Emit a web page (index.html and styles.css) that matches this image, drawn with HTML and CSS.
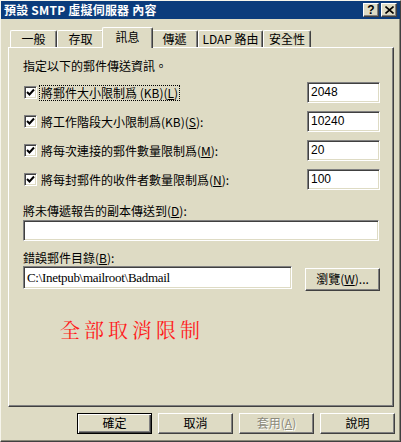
FILE: index.html
```html
<!DOCTYPE html>
<html lang="zh-Hant">
<head>
<meta charset="utf-8">
<title>預設 SMTP 虛擬伺服器 內容</title>
<link rel="stylesheet" href="styles.css">
</head>
<body>
<div class="window">
  <div class="titlebar">
    <span class="title">預設 SMTP 虛擬伺服器 內容</span>
    <span class="tbtn">?</span>
    <span class="tbtn close">
      <svg width="9" height="8" viewBox="0 0 9 8"><path d="M0.5 0.5 L8.5 7.5 M8.5 0.5 L0.5 7.5" stroke="#000" stroke-width="1.6"/></svg>
    </span>
  </div>

  <div class="tabstrip">
    <div class="tab w47">一般</div>
    <div class="tab w47">存取</div>
    <div class="tab active">訊息</div>
    <div class="tab w47">傳遞</div>
    <div class="tab w65">LDAP 路由</div>
    <div class="tab w48">安全性</div>
  </div>

  <div class="panel">
    <div class="intro">指定以下的郵件傳送資訊。</div>

    <div class="row first">
      <span class="check"><svg width="9" height="9" viewBox="0 0 9 9"><path d="M1 4 L3.5 6.5 L8 1.5" fill="none" stroke="#000" stroke-width="2"/></svg></span>
      <span class="label focus">將郵件大小限制爲 (KB)(<u>L</u>)</span>
      <span class="spacer"></span>
      <div class="field small">2048</div>
    </div>
    <div class="row">
      <span class="check"><svg width="9" height="9" viewBox="0 0 9 9"><path d="M1 4 L3.5 6.5 L8 1.5" fill="none" stroke="#000" stroke-width="2"/></svg></span>
      <span class="label">將工作階段大小限制爲(KB)(<u>S</u>):</span>
      <span class="spacer"></span>
      <div class="field small">10240</div>
    </div>
    <div class="row">
      <span class="check"><svg width="9" height="9" viewBox="0 0 9 9"><path d="M1 4 L3.5 6.5 L8 1.5" fill="none" stroke="#000" stroke-width="2"/></svg></span>
      <span class="label">將每次連接的郵件數量限制爲(<u>M</u>):</span>
      <span class="spacer"></span>
      <div class="field small">20</div>
    </div>
    <div class="row">
      <span class="check"><svg width="9" height="9" viewBox="0 0 9 9"><path d="M1 4 L3.5 6.5 L8 1.5" fill="none" stroke="#000" stroke-width="2"/></svg></span>
      <span class="label">將每封郵件的收件者數量限制爲(<u>N</u>):</span>
      <span class="spacer"></span>
      <div class="field small">100</div>
    </div>

    <div class="caption ndr">將未傳遞報告的副本傳送到(<u>D</u>):</div>
    <div class="field wide"></div>

    <div class="caption bad">錯誤郵件目錄(<u>B</u>):</div>
    <div class="pathrow">
      <div class="field path">C:\Inetpub\mailroot\Badmail</div>
      <div class="btn browse">瀏覽(<u>W</u>)...</div>
    </div>

    <div class="note">全部取消限制</div>
  </div>

  <div class="buttons">
    <div class="btn default">確定</div>
    <div class="btn">取消</div>
    <div class="btn disabled">套用(<u>A</u>)</div>
    <div class="btn">說明</div>
  </div>
</div>
</body>
</html>
```
FILE: styles.css
```css
* { box-sizing: border-box; }

html, body {
  margin: 0;
  padding: 0;
  width: 401px;
  height: 442px;
  overflow: hidden;
  background: #dedbc4;
}

body {
  font-family: "Noto Sans CJK TC", "Noto Sans", sans-serif;
  font-size: 12px;
  line-height: 14px;
  color: #000;
}

.window {
  width: 401px;
  height: 442px;
  border: 1px solid;
  border-color: #f6f5ec #404040 #404040 #f6f5ec;
  box-shadow: inset -1px -1px 0 #8a8878;
  background: #dedbc4;
}

.titlebar {
  height: 18px;
  background: #0b3c7c;
  display: flex;
  align-items: center;
  padding: 0 3px 0 3px;
}

.title {
  flex: 1;
  color: #fff;
  font-weight: bold;
  font-size: 12px;
  letter-spacing: 0.2px;
}

.tbtn {
  width: 16px;
  height: 14px;
  background: #dedbc4;
  border: 1px solid;
  border-color: #fff #404040 #404040 #fff;
  box-shadow: inset -1px -1px 0 #808080;
  display: flex;
  align-items: center;
  justify-content: center;
  font: bold 12px/12px "Liberation Sans", sans-serif;
  margin-left: 1px;
}

.tbtn.close { margin-left: 2px; }

.tabstrip {
  display: flex;
  align-items: flex-end;
  height: 20px;
  margin-top: 8px;
  padding-left: 9px;
  position: relative;
  z-index: 1;
}

.tab {
  height: 17px;
  border: 1px solid;
  border-color: #fff #404040 transparent #fff;
  border-bottom: none;
  box-shadow: inset -1px 0 0 #808080;
  border-radius: 2px 2px 0 0;
  text-align: center;
  line-height: 16px;
  white-space: nowrap;
}

.w47 { width: 47px; }
.w48 { width: 48px; }
.w65 { width: 65px; }

.tab.active {
  width: 51px;
  height: 21px;
  margin: 0 -1px -1px -2px;
  background: #dedbc4;
  line-height: 18px;
  position: relative;
}

.tab.active + .tab { margin-left: -1px; }

.panel {
  width: 386px;
  height: 360px;
  margin-left: 7px;
  border: 1px solid;
  border-color: #fff #404040 #404040 #fff;
  box-shadow: inset -1px -1px 0 #808080;
  padding: 11px 13px 0 14px;
  display: flex;
  flex-direction: column;
}

.intro { height: 14px; }

.row {
  display: flex;
  align-items: center;
  height: 21px;
  margin-top: 8px;
}

.row.first { margin-top: 9px; }

.check {
  width: 13px;
  height: 13px;
  margin-left: 1px;
  background: #fff;
  border: 1px solid;
  border-color: #808080 #fff #fff #808080;
  box-shadow: inset 1px 1px 0 #404040, inset -1px -1px 0 #dedbc4;
  display: flex;
  align-items: center;
  justify-content: center;
  flex: none;
}

.label {
  margin-left: 3px;
  padding: 0 1px;
  white-space: nowrap;
}

.label.focus { outline: 1px dotted #000; outline-offset: 0; }

.spacer { flex: 1; }

.field {
  background: #fff;
  border: 1px solid;
  border-color: #808080 #fff #fff #808080;
  box-shadow: inset 1px 1px 0 #404040, inset -1px -1px 0 #dedbc4;
  font-family: "Liberation Sans", "Noto Sans CJK TC", sans-serif;
  font-size: 12px;
  line-height: 15px;
  padding: 2px 3px 0 3px;
  white-space: nowrap;
  overflow: hidden;
}

.field.small { width: 73px; height: 21px; }

.caption { height: 14px; white-space: nowrap; }
.caption.ndr { margin-top: 14px; }
.caption.bad { margin-top: 10px; }

.field.wide { width: 356px; height: 21px; margin-top: 2px; }

.pathrow {
  display: flex;
  align-items: flex-start;
  margin-top: 1px;
}

.field.path {
  width: 269px;
  height: 23px;
  padding-top: 3px;
  font-family: "Liberation Serif", serif;
  font-size: 13px;
  letter-spacing: -0.3px;
}

.btn {
  width: 75px;
  height: 21px;
  border: 1px solid;
  border-color: #fff #404040 #404040 #fff;
  box-shadow: inset -1px -1px 0 #808080;
  background: #dedbc4;
  text-align: center;
  line-height: 18px;
  white-space: nowrap;
}

.btn.browse {
  height: 23px;
  margin-left: 13px;
  margin-top: 2px;
  line-height: 20px;
}

.note {
  margin-top: 27px;
  margin-left: 37px;
  color: #ff1a1a;
  font-family: "Noto Serif CJK TC", "Noto Serif CJK JP", "Noto Sans CJK TC", serif;
  font-size: 20px;
  line-height: 24px;
  letter-spacing: 4px;
}

.buttons {
  display: flex;
  justify-content: flex-end;
  gap: 6px;
  margin-top: 6px;
  padding-right: 5px;
}

.btn.default {
  border: 1px solid #000;
  box-shadow: inset 1px 1px 0 #fff, inset -1px -1px 0 #404040, inset -2px -2px 0 #808080;
}

.btn.disabled {
  color: #8c8a7c;
  text-shadow: 1px 1px 0 #fff;
}
```
